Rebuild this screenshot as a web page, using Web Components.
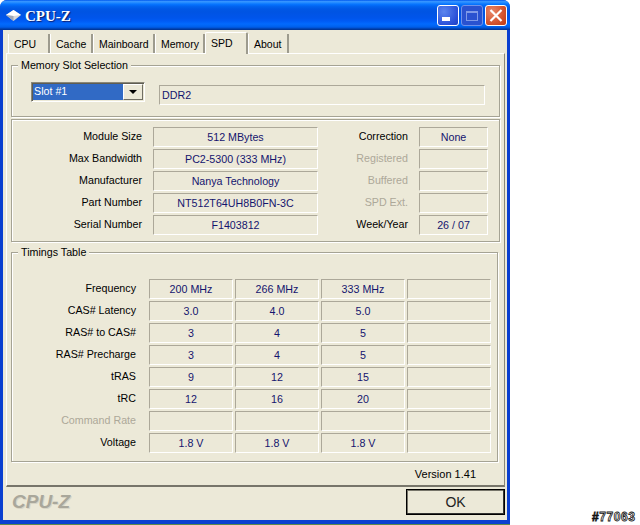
<!DOCTYPE html>
<html>
<head>
<meta charset="utf-8">
<title>CPU-Z</title>
<style>
    html, body { margin: 0; padding: 0; background: #fff; }
    body { width: 640px; height: 525px; overflow: hidden; font: 11px "Liberation Sans", Arial, sans-serif; }
</style>
</head>
<body>
<cz-desktop>
    <cz-window>
        <cz-titlebar title="CPU-Z" slot="title"></cz-titlebar>
        <cz-tabs slot="tabs">
            <cz-tab style="width:42px">CPU</cz-tab>
            <cz-tab style="width:43px">Cache</cz-tab>
            <cz-tab style="width:62px">Mainboard</cz-tab>
            <cz-tab style="width:50px">Memory</cz-tab>
            <cz-tab style="width:43px" active>SPD</cz-tab>
            <cz-tab style="width:41px">About</cz-tab>
        </cz-tabs>

        <cz-group legend="Memory Slot Selection" class="slot">
            <cz-combo value="Slot #1"></cz-combo>
            <cz-field value="DDR2" style="width:326px;margin-top:3px" align="left"></cz-field>
        </cz-group>

        <cz-group class="info">
            <cz-label>Module Size</cz-label><cz-field value="512 MBytes"></cz-field><cz-label>Correction</cz-label><cz-field value="None"></cz-field>
            <cz-label>Max Bandwidth</cz-label><cz-field value="PC2-5300 (333 MHz)"></cz-field><cz-label disabled>Registered</cz-label><cz-field></cz-field>
            <cz-label>Manufacturer</cz-label><cz-field value="Nanya Technology"></cz-field><cz-label disabled>Buffered</cz-label><cz-field></cz-field>
            <cz-label>Part Number</cz-label><cz-field value="NT512T64UH8B0FN-3C"></cz-field><cz-label disabled>SPD Ext.</cz-label><cz-field></cz-field>
            <cz-label>Serial Number</cz-label><cz-field value="F1403812"></cz-field><cz-label>Week/Year</cz-label><cz-field value="26 / 07"></cz-field>
        </cz-group>

        <cz-group legend="Timings Table" class="timings">
            <cz-label>Frequency</cz-label><cz-field value="200 MHz"></cz-field><cz-field value="266 MHz"></cz-field><cz-field value="333 MHz"></cz-field><cz-field></cz-field>
            <cz-label>CAS# Latency</cz-label><cz-field value="3.0"></cz-field><cz-field value="4.0"></cz-field><cz-field value="5.0"></cz-field><cz-field></cz-field>
            <cz-label>RAS# to CAS#</cz-label><cz-field value="3"></cz-field><cz-field value="4"></cz-field><cz-field value="5"></cz-field><cz-field></cz-field>
            <cz-label>RAS# Precharge</cz-label><cz-field value="3"></cz-field><cz-field value="4"></cz-field><cz-field value="5"></cz-field><cz-field></cz-field>
            <cz-label>tRAS</cz-label><cz-field value="9"></cz-field><cz-field value="12"></cz-field><cz-field value="15"></cz-field><cz-field></cz-field>
            <cz-label>tRC</cz-label><cz-field value="12"></cz-field><cz-field value="16"></cz-field><cz-field value="20"></cz-field><cz-field></cz-field>
            <cz-label disabled>Command Rate</cz-label><cz-field></cz-field><cz-field></cz-field><cz-field></cz-field><cz-field></cz-field>
            <cz-label>Voltage</cz-label><cz-field value="1.8 V"></cz-field><cz-field value="1.8 V"></cz-field><cz-field value="1.8 V"></cz-field><cz-field></cz-field>
        </cz-group>

        <cz-version>Version 1.41</cz-version>

        <cz-footer slot="footer"></cz-footer>
    </cz-window>
</cz-desktop>

<script>
class CzDesktop extends HTMLElement {
    constructor() {
        super();
        this.attachShadow({ mode: 'open' });
        this.shadowRoot.innerHTML = `
            <style>
                :host { display: flex; width: 640px; height: 525px; align-items: flex-start; }
                .left { width: 510px; display: flex; flex-direction: column; }
                .grass { height: 1px; background: #5d8a4c; }
                .tag {
                    margin: 511px 0 0 82px;
                    font: bold 12px/12px "Liberation Sans", Arial, sans-serif;
                    letter-spacing: 0.6px;
                    color: #fff;
                    -webkit-text-stroke: 0.8px #111;
                }
            </style>
            <div class="left"><slot></slot><div class="grass"></div></div>
            <div class="tag">#77063</div>
        `;
    }
}

class CzWindow extends HTMLElement {
    constructor() {
        super();
        this.attachShadow({ mode: 'open' });
        this.shadowRoot.innerHTML = `
            <style>
                :host {
                    display: flex;
                    flex-direction: column;
                    width: 510px;
                    height: 524px;
                    box-sizing: border-box;
                    background: #0a3fd0;
                    border-radius: 7px 7px 0 0;
                    padding-bottom: 4px;
                    color: #000;
                }
                .client {
                    flex: 1;
                    margin: 0 3px;
                    background: #ece9d8;
                    display: flex;
                    flex-direction: column;
                    min-height: 0;
                }
                .tabs { padding: 4px 0 0 5px; height: 19px; }
                .panel {
                    margin-left: 3px;
                    width: 499px;
                    height: 434px;
                    box-sizing: border-box;
                    background: #ece9d8;
                    border-top: 1px solid #fff;
                    border-left: 1px solid #fff;
                    border-right: 1px solid #8a8878;
                    border-bottom: 2px solid #77756a;
                    padding: 5px 0 0 4px;
                }
            </style>
            <slot name="title"></slot>
            <div class="client">
                <div class="tabs"><slot name="tabs"></slot></div>
                <div class="panel"><slot></slot></div>
                <slot name="footer"></slot>
            </div>
        `;
    }
}

class CzTitlebar extends HTMLElement {
    constructor() {
        super();
        this.attachShadow({ mode: 'open' });
        this.shadowRoot.innerHTML = `
            <style>
                :host {
                    display: flex;
                    align-items: center;
                    height: 30px;
                    box-sizing: border-box;
                    padding: 1px 3px 0 6px;
                    border-radius: 7px 7px 0 0;
                    background: linear-gradient(to bottom, #0058ee 0%, #3593ff 5%, #288eff 8%, #127dff 12%, #036ffc 16%, #0262ee 22%, #0057e5 30%, #0054e3 40%, #0055eb 60%, #005bf5 70%, #026afe 80%, #0062ef 88%, #0052d6 93%, #0040ab 96%, #003092 100%);
                }
                .icon { width: 15px; height: 11px; flex: none; }
                .name {
                    margin-left: 4px;
                    font: bold 15px/18px "Liberation Serif", "Times New Roman", serif;
                    color: #fff;
                    text-shadow: 1px 1px 1px #0f1f6e;
                    flex: 1;
                }
                .btn {
                    width: 22px;
                    height: 21px;
                    box-sizing: border-box;
                    margin-left: 2px;
                    border: 1px solid #fff;
                    border-radius: 3px;
                    display: flex;
                    align-items: center;
                    justify-content: center;
                }
                .btn svg { display: block; }
                .min { background: radial-gradient(circle at 30% 30%, #5b85ee, #2a50d8 70%, #1f3fc0); }
                .max { background: #2a52d0; border-color: #6f92ea; }
                .close { background: radial-gradient(circle at 30% 30%, #e8886a, #d4532e 60%, #bd3a14); }
            </style>
            <svg class="icon" viewBox="0 0 15 11">
                <polygon points="7.5,0 15,5 7.5,11 0,5" fill="#d8d8d8"/>
                <polygon points="7.5,0 15,5 7.5,6 0,5" fill="#ffffff"/>
                <polygon points="0,5 7.5,6 7.5,11" fill="#9fa8b8"/>
            </svg>
            <div class="name">${this.getAttribute('title')}</div>
            <div class="btn min"><svg width="20" height="19" viewBox="0 0 20 19"><rect x="4" y="11" width="8" height="4" fill="#fff"/></svg></div>
            <div class="btn max"><svg width="20" height="19" viewBox="0 0 20 19"><rect x="4.5" y="5.5" width="11" height="9" fill="none" stroke="#7f9ae8"/><rect x="4" y="5" width="12" height="2" fill="#7f9ae8"/></svg></div>
            <div class="btn close"><svg width="20" height="19" viewBox="0 0 20 19"><path d="M4.5 4 L15.5 15 M15.5 4 L4.5 15" stroke="#fff" stroke-width="2.2"/></svg></div>
        `;
        this.removeAttribute('title');
    }
}

class CzTabs extends HTMLElement {
    constructor() {
        super();
        this.attachShadow({ mode: 'open' });
        this.shadowRoot.innerHTML = `
            <style>
                :host { display: flex; align-items: flex-end; height: 19px; }
            </style>
            <slot></slot>
        `;
    }
}

class CzTab extends HTMLElement {
    constructor() {
        super();
        this.attachShadow({ mode: 'open' });
        this.shadowRoot.innerHTML = `
            <style>
                :host {
                    display: block;
                    box-sizing: border-box;
                    height: 19px;
                    border-right: 2px solid #9d9b8e;
                    border-left: 1px solid #fff;
                    padding: 4px 0 0 5px;
                    font: 10.5px/13px "Liberation Sans", Arial, sans-serif;
                    color: #000;
                }
                :host([active]) {
                    height: 22px;
                    margin-bottom: -1px;
                    margin-top: -2px;
                    position: relative;
                    padding-top: 4px;
                    background: #ece9d8;
                    border-top: 1px solid #fff;
                    border-radius: 2px 2px 0 0;
                }
            </style>
            <slot></slot>
        `;
    }
}

class CzGroup extends HTMLElement {
    constructor() {
        super();
        this.attachShadow({ mode: 'open' });
        const legend = this.getAttribute('legend');
        this.shadowRoot.innerHTML = `
            <style>
                :host { display: block; }
                :host(.slot) { width: 489px; }
                :host(.info) { width: 489px; margin-top: 2px; }
                :host(.timings) { width: 487px; margin-top: 4px; }
                fieldset {
                    margin: 0;
                    min-width: 0;
                    border: 1px solid #a5a394;
                    box-shadow: inset 1px 1px 0 #fff, 1px 1px 0 #fff;
                    padding: 0;
                }
                legend {
                    margin-left: 6px;
                    padding: 0 3px;
                    font: 10.7px/12px "Liberation Sans", Arial, sans-serif;
                    background: #ece9d8;
                }
                .body { display: grid; }
                :host(.slot) .body {
                    grid-template-columns: 114px 326px;
                    column-gap: 14px;
                    padding: 11px 0 11px 19px;
                    align-items: start;
                }
                :host(.info) .body {
                    grid-template-columns: 130px 165px 79px 69px;
                    column-gap: 11px;
                    row-gap: 2px;
                    padding: 7px 0 6px 0;
                }
                :host(.timings) .body {
                    grid-template-columns: 135px repeat(4, 84px);
                    column-gap: 2px;
                    row-gap: 2px;
                    padding: 21px 0 8px 0;
                }
                :host(.timings) ::slotted(cz-label) { width: 124px; }
            </style>
            <fieldset>
                ${legend ? `<legend>${legend}</legend>` : ''}
                <div class="body"><slot></slot></div>
            </fieldset>
        `;
    }
}

class CzLabel extends HTMLElement {
    constructor() {
        super();
        this.attachShadow({ mode: 'open' });
        this.shadowRoot.innerHTML = `
            <style>
                :host {
                    display: block;
                    height: 20px;
                    font: 10.7px/18px "Liberation Sans", Arial, sans-serif;
                    text-align: right;
                    white-space: nowrap;
                    color: #000;
                }
                :host([disabled]) { color: #aca899; }
            </style>
            <slot></slot>
        `;
    }
}

class CzField extends HTMLElement {
    constructor() {
        super();
        this.attachShadow({ mode: 'open' });
        this.shadowRoot.innerHTML = `
            <style>
                :host {
                    display: block;
                    box-sizing: border-box;
                    height: 20px;
                    border-top: 1px solid #aca899;
                    border-left: 1px solid #aca899;
                    border-right: 1px solid #fff;
                    border-bottom: 1px solid #fff;
                    font: 10.7px/19px "Liberation Sans", Arial, sans-serif;
                    color: #14146e;
                    text-align: center;
                    white-space: nowrap;
                }
                :host([align="left"]) { text-align: left; padding-left: 2px; }
            </style>
            ${this.getAttribute('value') || ''}
        `;
    }
}

class CzCombo extends HTMLElement {
    constructor() {
        super();
        this.attachShadow({ mode: 'open' });
        this.shadowRoot.innerHTML = `
            <style>
                :host {
                    display: flex;
                    box-sizing: border-box;
                    width: 114px;
                    height: 20px;
                    padding: 1px;
                    border: 1px solid;
                    border-color: #8a887a #fff #fff #8a887a;
                    box-shadow: inset 1px 1px 0 #5f5d52;
                    background: #ece9d8;
                    font: 10.7px/15px "Liberation Sans", Arial, sans-serif;
                }
                .val { flex: 1; background: #316ac5; color: #fff; padding-left: 1px; }
                .arrow {
                    width: 20px;
                    box-sizing: border-box;
                    background: #ece9d8;
                    border: 1px solid;
                    border-color: #fff #716f64 #716f64 #fff;
                    display: flex;
                    align-items: center;
                    justify-content: center;
                }
                .arrow svg { display: block; }
            </style>
            <div class="val">${this.getAttribute('value')}</div>
            <div class="arrow"><svg width="8" height="4" viewBox="0 0 8 4"><polygon points="0,0 8,0 4,4" fill="#000"/></svg></div>
        `;
    }
}

class CzVersion extends HTMLElement {
    constructor() {
        super();
        this.attachShadow({ mode: 'open' });
        this.shadowRoot.innerHTML = `
            <style>
                :host {
                    display: block;
                    width: 465px;
                    padding-top: 5px;
                    text-align: right;
                    font: 11px/14px "Liberation Sans", Arial, sans-serif;
                    color: #000;
                }
            </style>
            <slot></slot>
        `;
    }
}

class CzFooter extends HTMLElement {
    constructor() {
        super();
        this.attachShadow({ mode: 'open' });
        this.shadowRoot.innerHTML = `
            <style>
                :host { display: block; flex: 1; }
                .bar {
                    display: flex;
                    align-items: flex-start;
                    justify-content: space-between;
                    padding: 2px 2px 0 9px;
                }
                .logo {
                    margin-top: 2px;
                    font: italic bold 19px/22px "Liberation Sans", Arial, sans-serif;
                    color: #a9a79b;
                    text-shadow: 1px 1px 0 #d8d5c6;
                }
                button {
                    width: 99px;
                    height: 26px;
                    box-sizing: border-box;
                    background: #ece9d8;
                    border: 1px solid #000;
                    box-shadow: inset -1px -1px 0 #333, inset 1px 1px 0 #77756a;
                    padding: 0;
                    font: 14px "Liberation Sans", Arial, sans-serif;
                    color: #222;
                }
            </style>
            <div class="bar">
                <div class="logo">CPU-Z</div>
                <button>OK</button>
            </div>
        `;
    }
}

customElements.define('cz-desktop', CzDesktop);
customElements.define('cz-window', CzWindow);
customElements.define('cz-titlebar', CzTitlebar);
customElements.define('cz-tabs', CzTabs);
customElements.define('cz-tab', CzTab);
customElements.define('cz-group', CzGroup);
customElements.define('cz-label', CzLabel);
customElements.define('cz-field', CzField);
customElements.define('cz-combo', CzCombo);
customElements.define('cz-version', CzVersion);
customElements.define('cz-footer', CzFooter);
</script>
</body>
</html>
